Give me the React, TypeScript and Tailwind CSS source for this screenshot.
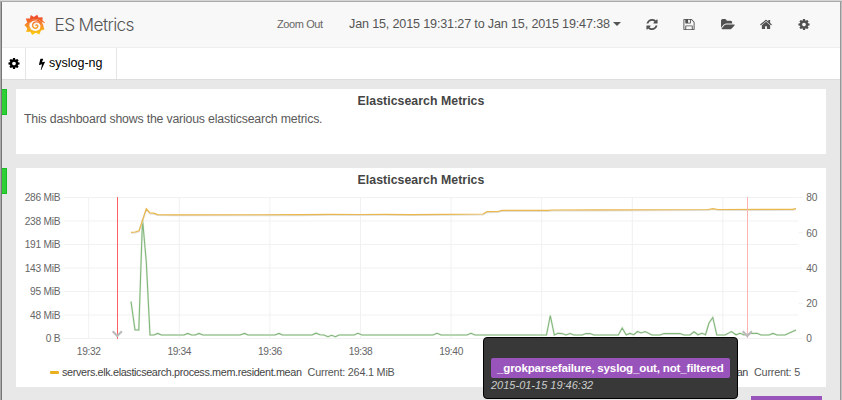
import type { ReactNode } from "react";

const ICONS = {
  cog: {
    w: 1536,
    d: "M1024 896q0-106-75-181t-181-75-181 75-75 181 75 181 181 75 181-75 75-181zm512-109v222q0 12-8 23t-20 13l-185 28q-19 54-39 91 35 50 107 138 10 12 10 25t-9 23q-27 37-99 108t-94 71q-12 0-26-9l-138-108q-44 23-91 38-16 136-29 186-7 28-36 28h-222q-14 0-24.5-8.5t-11.5-21.5l-28-184q-49-16-90-37l-141 107q-10 9-25 9-14 0-25-11-126-114-165-168-7-10-7-23 0-12 8-23 15-21 51-66.5t54-70.5q-27-50-41-99l-183-27q-13-2-21-12.5t-8-23.5v-222q0-12 8-23t19-13l186-28q14-46 39-92-40-57-107-138-10-12-10-24 0-10 9-23 26-36 98.5-107.5t94.5-71.5q13 0 26 10l138 107q44-23 91-38 16-136 29-186 7-28 36-28h222q14 0 24.5 8.5t11.5 21.5l28 184q49 16 90 37l142-107q9-9 24-9 13 0 25 10 129 119 165 170 7 8 7 22 0 12-8 23-15 21-51 66.5t-54 70.5q26 50 41 98l183 28q13 2 21 12.5t8 23.5z",
  },
  refresh: {
    w: 1536,
    d: "M1511 1056q0 5-1 7-64 268-268 434.5t-478 166.5q-146 0-282.5-55t-243.5-157l-129 129q-19 19-45 19t-45-19-19-45v-448q0-26 19-45t45-19h448q26 0 45 19t19 45-19 45l-137 137q71 66 161 102t187 36q134 0 250-65t186-179q11-17 53-117 8-23 30-23h192q13 0 22.5 9.5t9.5 22.5zm25-800v448q0 26-19 45t-45 19h-448q-26 0-45-19t-19-45 19-45l138-138q-148-137-349-137-134 0-250 65t-186 179q-11 17-53 117-8 23-30 23h-199q-13 0-22.5-9.5t-9.5-22.5v-7q65-268 270-434.5t480-166.5q146 0 284 55.5t245 156.5l130-129q19-19 45-19t45 19 19 45z",
  },
  save: {
    w: 1536,
    d: "M384 1536h768v-384h-768v384zm896 0h128v-896q0-14-10-38.5t-20-34.5l-281-281q-10-10-34-20t-39-10v416q0 40-28 68t-68 28h-576q-40 0-68-28t-28-68v-416h-128v1280h128v-416q0-40 28-68t68-28h832q40 0 68 28t28 68v416zm-384-928v-320q0-13-9.5-22.5t-22.5-9.5h-192q-13 0-22.5 9.5t-9.5 22.5v320q0 13 9.5 22.5t22.5 9.5h192q13 0 22.5-9.5t9.5-22.5zm640 32v928q0 40-28 68t-68 28h-1344q-40 0-68-28t-28-68v-1344q0-40 28-68t68-28h928q40 0 88 20t76 48l280 280q28 28 48 76t20 88z",
  },
  folder: {
    w: 1920,
    d: "M1879 952q0 31-31 66l-336 396q-43 51-120.5 86.5t-143.5 35.5h-1088q-34 0-60.5-13t-26.5-43q0-31 31-66l336-396q43-51 120.5-86.5t143.5-35.5h1088q34 0 60.5 13t26.5 43zm-343-344v160h-832q-94 0-197 47.5t-164 119.5l-337 396-5 6q0-4-.5-12.5t-.5-12.5v-960q0-92 66-158t158-66h320q92 0 158 66t66 158v32h544q92 0 158 66t66 158z",
  },
  home: {
    w: 1664,
    d: "M1408 992v480q0 26-19 45t-45 19h-384v-384h-256v384h-384q-26 0-45-19t-19-45v-480q0-1 .5-3t.5-3l575-474 575 474q1 2 1 6zm223-69l-62 74q-8 9-21 11h-3q-13 0-21-7l-692-577-692 577q-12 8-24 7-13-2-21-11l-62-74q-8-10-7-23.5t11-21.5l719-599q32-26 76-26t76 26l244 204v-195q0-14 9-23t23-9h192q14 0 23 9t9 23v408l219 182q10 8 11 21.5t-7 23.5z",
  },
  bolt: {
    w: 896,
    d: "M885 566q18 20 7 44l-540 1157q-13 25-42 25-4 0-14-2-17-5-25.5-19t-4.5-30l197-808-406 101q-4 1-12 1-18 0-31-11-18-15-13-39l201-825q4-14 16-23t28-9h328q19 0 32 12.5t13 29.5q0 8-5 18l-171 463 396-98q8-2 12-2 19 0 34 15z",
  },
};

function Icon({ name, className }: { name: keyof typeof ICONS; className: string }) {
  const icon = ICONS[name];
  return (
    <svg viewBox={`0 0 ${icon.w} 1792`} className={`shrink-0 fill-current ${className}`}>
      <path d={icon.d} />
    </svg>
  );
}

function Logo() {
  return (
    <svg viewBox="0 0 22 22" className="size-[22px] shrink-0">
      <defs>
        <linearGradient id="flame" gradientUnits="userSpaceOnUse" x1="0" y1="1" x2="0" y2="21">
          <stop offset="0.1" stopColor="#ee4e2b" />
          <stop offset="0.5" stopColor="#f68b2a" />
          <stop offset="1" stopColor="#fdd30c" />
        </linearGradient>
      </defs>
      <path
        fill="url(#flame)"
        d="M6.8 1L9.8 3L13.2 .8L14.6 3.6L18.6 3.2L18.5 6.5L20.9 8.6L19.2 11.6L20.4 15.5L17 16.6L15.3 20.4L11.8 18.7L8.2 21L6.4 17.8L2.2 18L3.2 14.2L.4 11L3.2 8.5L1.8 4.6L5.9 4.6Z"
      />
      <circle cx="11.3" cy="11" r="6" fill="#f8f8f8" />
      <path d="M13 5.4Q17.6 6.2 18.9 10.4L21.5 12L21.5 9.5L18 8Z" fill="#f8f8f8" />
      <path
        d="M6.2 8C9 4.8 15 5 17 9.2M17 14C18 10.5 15.7 7.9 12.6 7.9C10.2 7.9 8.5 9.4 8.6 11.4C8.7 13.2 10 14.3 11.6 14.2C13 14.1 13.9 13.1 13.7 12C13.5 11.1 12.7 10.8 12 11.1"
        fill="none"
        stroke="url(#flame)"
        strokeWidth="1.4"
        strokeLinecap="round"
      />
    </svg>
  );
}

const ROWS = [
  { y: 197.5, label: "286 MiB" },
  { y: 221, label: "238 MiB" },
  { y: 244.5, label: "191 MiB" },
  { y: 268, label: "143 MiB" },
  { y: 291.5, label: "95 MiB" },
  { y: 315, label: "48 MiB" },
  { y: 338.5, label: "0 B" },
];
const COLUMNS = [
  { x: 88.7, label: "19:32" },
  { x: 179.3, label: "19:34" },
  { x: 269.9, label: "19:36" },
  { x: 360.5, label: "19:38" },
  { x: 451.1, label: "19:40" },
  { x: 541.7, label: "" },
  { x: 632.3, label: "" },
  { x: 722.9, label: "" },
];
const RIGHT = [
  { y: 197.5, label: "80" },
  { y: 232.8, label: "60" },
  { y: 268, label: "40" },
  { y: 303.3, label: "20" },
  { y: 338.5, label: "0" },
];

const MEMORY =
  "131,232.3 135,232 139,230.8 142.6,220 146.3,208.8 150,213 154,213.2 157.5,214.6 175,214.8 300,214.7 330,214.3 360,214.5 385,214.3 410,214.6 445,214.3 483,214 487,211.7 498,211.5 502,210.4 548,210.4 552,210 600,209.9 708,209.5 713,208.6 718,209.5 792,209.3 796,208.7";
const THREADS =
  "131,301.5 135,330 138.8,330 142.5,219 146.3,262 150,335 154,335 157.6,333.4 161.5,335 184,335 187.8,333.4 191.5,335 195.3,335 199,333.4 203,335 240,335 244.5,333.4 248,335 275,335 279,333.4 282.5,335 312,335 316,333.2 320,334.7 324,335 328,336.7 331.5,335.3 335.5,336.7 339,335 354,335 358,333.3 362,335 433,335 437,333.3 441,335 467,335 471,333.3 475,335 546.5,335 550.3,315.5 554.3,335 558,333.2 562,333.6 566,335 570,333.5 574,335 582,335 586,333.5 590,333.6 594,335 618.3,335 622.2,328 626.2,334.8 630,333.4 633.8,334.7 637.5,331.5 641,333 645,331.6 652,335 660,335 664,333.5 680,333.6 684,335 690,335 694,331.8 698,334.8 702,333.3 705.5,334.7 709,323 712.8,317.5 716.8,335 725,335 731.5,331.6 736,334.8 740,333.3 744,335 750,333.5 757,333.3 761,335 769,335 773,333.4 777,335 785,335 796,330";

function Chart() {
  return (
    <svg viewBox="16 190 810 172" className="block h-[172px] w-[810px] font-['Liberation_Sans',Arial,sans-serif]">
      <g stroke="#f1f1f1" strokeWidth="1">
        {ROWS.map((r) => (
          <line key={r.y} x1="64" x2="798.5" y1={r.y} y2={r.y} />
        ))}
        {COLUMNS.map((c) => (
          <line key={c.x} x1={c.x} x2={c.x} y1="197.5" y2="338.5" />
        ))}
        {RIGHT.map((r) => (
          <line key={r.y} x1="798.5" x2="802.5" y1={r.y} y2={r.y} />
        ))}
      </g>
      <g fill="#666" fontSize="10.2">
        {ROWS.map((r) => (
          <text key={r.y} x="60.3" y={r.y + 3.8} textAnchor="end" letterSpacing="-0.25">
            {r.label}
          </text>
        ))}
        {COLUMNS.filter((c) => c.label).map((c) => (
          <text key={c.x} x={c.x} y="355" textAnchor="middle" letterSpacing="-0.35">
            {c.label}
          </text>
        ))}
        {RIGHT.map((r) => (
          <text key={r.y} x="806.3" y={r.y + 3.8} letterSpacing="-0.2">
            {r.label}
          </text>
        ))}
      </g>
      <polyline points={THREADS} fill="none" stroke="#e9f2e7" strokeWidth="2.2" />
      <polyline points={THREADS} fill="none" stroke="#82b57b" strokeWidth="1.1" />
      <polyline points={MEMORY} transform="translate(0 .7)" fill="none" stroke="#e3dfd6" strokeWidth="1.6" />
      <polyline points={MEMORY} fill="none" stroke="#e9b84e" strokeWidth="1.2" />
      <rect x="117" y="197" width="1" height="142" fill="#ff6060" />
      <rect x="747" y="197" width="1" height="141" fill="#ffb4b4" />
      <g fill="none" stroke="#bbb" strokeWidth="2.2">
        <path d="M112.7 331.3L117.3 336L121.9 331.3" />
        <path d="M742.7 331.3L747.3 336L751.9 331.3" />
      </g>
    </svg>
  );
}

function Row({ className, children }: { className: string; children: ReactNode }) {
  return (
    <div className={`flex items-start ${className}`}>
      <div className="mr-[9px] h-[26px] w-[5px] shrink-0 border border-l-0 border-[#17bf24] bg-[#2fcf36]" />
      <section className="h-full w-[810px] overflow-hidden bg-white">
        <h2 className="h-[22px] pt-[4px] text-center text-[12.3px] leading-[17px] font-bold text-[#444]">
          <span className="tracking-[0.05px]">Elasticsearch Metrics</span>
        </h2>
        {children}
      </section>
    </div>
  );
}

export default function App() {
  return (
    <div className="relative flex h-[400px] w-[842px] flex-col overflow-hidden bg-[#e8e8e8] font-['Liberation_Sans',Arial,sans-serif]">
      <div className="h-[2px] shrink-0 border-b border-[#aaa] bg-[#d5d5d5]" />
      <div className="flex min-h-0 flex-1">
        <div className="w-[2px] shrink-0 border-r border-[#777] bg-[#aaa]" />
        <main className="flex w-[838px] flex-col">
          <header className="flex h-[46px] shrink-0 items-center border-b border-[#eee] bg-[#f8f8f8] text-[#555]">
            <div className="flex w-[275px] items-center pl-[22px]">
              <Logo />
              <span className="ml-[8.5px] font-[Inter] text-[17.3px] leading-6 font-light tracking-[-0.65px] whitespace-nowrap text-[#555]">ES Metrics</span>
            </div>
            <span className="w-[72px] text-[11px] tracking-[-0.4px] whitespace-nowrap text-[#666]">Zoom Out</span>
            <div className="flex w-[296px] items-center">
              <span className="text-[12.6px] tracking-[-0.16px] whitespace-nowrap">Jan 15, 2015 19:31:27 to Jan 15, 2015 19:47:38</span>
              <span className="ml-[3px] border-x-[4px] border-t-[4px] border-x-transparent border-t-[#555]" />
            </div>
            <div className="flex flex-1 items-center text-[#505050]">
              <Icon name="refresh" className="ml-[1px] h-[13px] w-[12px]" />
              <Icon name="save" className="ml-[25px] h-[13px] w-[12px]" />
              <Icon name="folder" className="ml-[25.5px] h-[13px] w-[14px]" />
              <Icon name="home" className="ml-[25.5px] h-[13px] w-[12px]" />
              <Icon name="cog" className="ml-[25.5px] h-[13px] w-[12px]" />
            </div>
          </header>
          <nav className="flex h-[32px] shrink-0 items-stretch border-b border-[#ddd] bg-white text-black">
            <div className="flex w-[24px] items-center border-r border-[#e5e5e5] pl-[6px]">
              <Icon name="cog" className="h-[13px] w-[12px]" />
            </div>
            <div className="flex w-[91px] items-center border-r border-[#e5e5e5] pl-[13px]">
              <Icon name="bolt" className="h-[12px] w-[6px]" />
              <span className="ml-[4px] text-[12.5px] whitespace-nowrap">syslog-ng</span>
            </div>
          </nav>
          <Row className="mt-[9px] h-[65px] shrink-0">
            <p className="ml-[8px] text-[12.3px] leading-[16px] tracking-[-0.18px] whitespace-nowrap text-[#5a5a5a]">
              This dashboard shows the various elasticsearch metrics.
            </p>
          </Row>
          <Row className="mt-[14px] h-[219px] shrink-0">
            <Chart />
            <div className="flex h-[20px] items-center pl-[34px] text-[10.8px] tracking-[-0.35px] whitespace-nowrap text-[#444]">
              <span className="mr-[3px] h-[3px] w-[9px] rounded-[1px] bg-[#eab020]" />
              <span>servers.elk.elasticsearch.process.mem.resident.mean</span>
              <span className="ml-[6px] tracking-[-0.2px] text-[#555]">Current: 264.1 MiB</span>
              <span className="mr-[26px] ml-auto">
                mean<span className="ml-[6px] tracking-[-0.2px] text-[#555]">Current: 5</span>
              </span>
            </div>
          </Row>
          <div className="mt-[9px] ml-[749px] h-[10px] w-[71px] shrink-0 bg-[#9954bb]" />
        </main>
        <div className="w-[2px] shrink-0 border-l border-[#999] bg-[#c0c0c0]" />
      </div>
      <div className="absolute top-[337px] left-[483px] h-[62px] w-[255px] rounded-[4px] border border-black bg-[#383838] pt-[20px] pl-[7px]">
        <div className="flex h-[20px] w-[239px] items-center rounded-[2px] bg-[#9954bb] pl-[6px] text-[11.6px] tracking-[-0.18px] font-bold whitespace-nowrap text-white">
          _grokparsefailure, syslog_out, not_filtered
        </div>
        <div className="text-[11px] leading-[15px] whitespace-nowrap text-[#ccc] italic">2015-01-15 19:46:32</div>
      </div>
    </div>
  );
}
